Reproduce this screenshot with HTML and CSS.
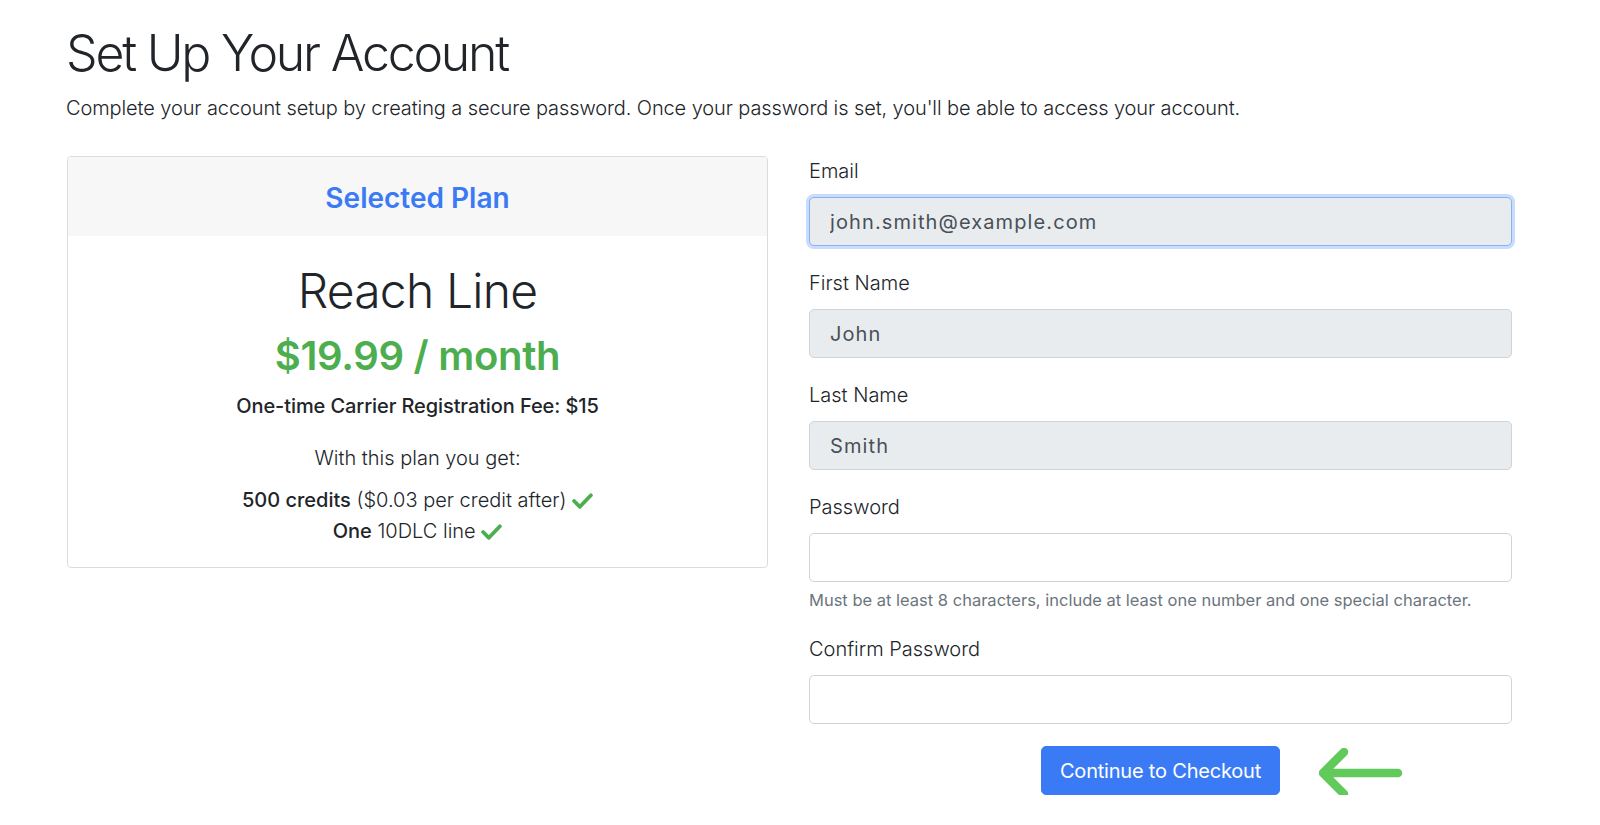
FILE: index.html
```html
<!DOCTYPE html>
<html lang="en">
<head>
<meta charset="utf-8">
<title>Set Up Your Account</title>
<link rel="stylesheet" href="styles.css">
</head>
<body>
<main class="page">
  <h1 class="title">Set Up Your Account</h1>
  <p class="lead">Complete your account setup by creating a secure password. Once your password is set, you'll be able to access your account.</p>

  <div class="layout">
    <section class="card">
      <div class="card-header">
        <h3 class="card-title">Selected Plan</h3>
      </div>
      <div class="card-body">
        <h2 class="plan-name">Reach Line</h2>
        <div class="plan-price">$19.99 / month</div>
        <div class="plan-fee">One-time Carrier Registration Fee: $15</div>
        <p class="plan-intro">With this plan you get:</p>
        <ul class="features">
          <li><strong>500 credits</strong> ($0.03 per credit after) <svg class="check" viewBox="0 0 20 16" width="21" height="17"><path d="M2 8.5 L7.5 14 L18 3" fill="none" stroke="#4cae4f" stroke-width="3.6" stroke-linecap="round" stroke-linejoin="round"/></svg></li>
          <li><strong>One</strong> 10DLC line <svg class="check" viewBox="0 0 20 16" width="21" height="17"><path d="M2 8.5 L7.5 14 L18 3" fill="none" stroke="#4cae4f" stroke-width="3.6" stroke-linecap="round" stroke-linejoin="round"/></svg></li>
        </ul>
      </div>
    </section>

    <form class="form">
      <div class="group">
        <label class="label" for="email">Email</label>
        <input class="input readonly focus" id="email" type="text" value="john.smith@example.com" readonly>
      </div>
      <div class="group">
        <label class="label" for="first">First Name</label>
        <input class="input readonly" id="first" type="text" value="John" readonly>
      </div>
      <div class="group">
        <label class="label" for="last">Last Name</label>
        <input class="input readonly" id="last" type="text" value="Smith" readonly>
      </div>
      <div class="group">
        <label class="label" for="pw">Password</label>
        <input class="input" id="pw" type="password">
        <small class="help">Must be at least 8 characters, include at least one number and one special character.</small>
      </div>
      <div class="group">
        <label class="label" for="pw2">Confirm Password</label>
        <input class="input" id="pw2" type="password">
      </div>
      <div class="actions">
        <div class="btn-wrap">
          <button class="btn" type="button">Continue to Checkout</button>
          <svg class="arrow" viewBox="0 0 84 52" width="84" height="52"><path d="M79 25 L4 25 M4 25 L25 4 M4 25 L25 46" fill="none" stroke="#62c95b" stroke-width="8.5" stroke-linecap="round" stroke-linejoin="round"/></svg>
        </div>
      </div>
    </form>
  </div>
</main>
</body>
</html>
```

FILE: styles.css
```css
* { box-sizing: border-box; }

html, body {
  margin: 0;
  background: #ffffff;
}

body {
  font-family: Inter, "Noto Sans", "Liberation Sans", sans-serif;
  color: #212529;
}

.page {
  padding: 23px 80px 0 66px;
}

.title {
  margin: 0 0 10px 0;
  font-size: 50px;
  line-height: 1.2;
  font-weight: 300;
  letter-spacing: -2.2px;
  color: #212529;
}

.lead {
  margin: 0 0 33px 0;
  font-size: 20px;
  line-height: 1.5;
  font-weight: 300;
  letter-spacing: -0.1px;
}

.layout {
  display: grid;
  grid-template-columns: 701px 703px;
  column-gap: 41px;
  align-items: start;
  padding-left: 1px;
}

/* Card */
.card {
  border: 1px solid #dcdcdc;
  border-radius: 4px;
  background: #fff;
  overflow: hidden;
}

.card-header {
  background: #f7f7f8;
  padding: 25px 20px 20px;
  text-align: center;
}

.card-title {
  margin: 0;
  font-size: 28px;
  line-height: 1.2;
  font-weight: 600;
  color: #3a7bf5;
}

.card-body {
  padding: 26px 20px 20px;
  text-align: center;
}

.plan-name {
  margin: 0 0 13px 0;
  font-size: 48px;
  line-height: 1.2;
  font-weight: 300;
  letter-spacing: -0.8px;
  color: #212529;
}

.plan-price {
  margin: 0 0 11px 0;
  font-size: 40px;
  line-height: 1.2;
  font-weight: 600;
  color: #4cae4f;
  letter-spacing: -0.3px;
}

.plan-fee {
  margin: 0 0 22px 0;
  font-size: 20px;
  line-height: 1.5;
  font-weight: 500;
  letter-spacing: -0.1px;
}

.plan-intro {
  margin: 0 0 12px 0;
  font-size: 20px;
  line-height: 1.5;
  font-weight: 300;
}

.features {
  list-style: none;
  margin: 0;
  padding: 0;
  font-size: 20px;
  line-height: 31px;
  font-weight: 300;
}

.features strong {
  font-weight: 500;
}

.check {
  vertical-align: -2px;
}

/* Form */
.group {
  display: flex;
  flex-direction: column;
  margin-bottom: 22px;
}

.label {
  font-size: 20px;
  line-height: 30px;
  font-weight: 300;
  margin-bottom: 11px;
  color: #212529;
}

.input {
  height: 49px;
  width: 100%;
  padding: 0 20px;
  font-family: Inter, "Noto Sans", sans-serif;
  font-size: 20px;
  letter-spacing: 1.1px;
  color: #495057;
  background: #fff;
  border: 1px solid #ced4da;
  border-radius: 5px;
  outline: none;
}

.input.readonly {
  background: #e9ecef;
}

.input.focus {
  border-color: #86b3f7;
  box-shadow: 0 0 0 3px rgba(80, 140, 245, 0.3);
}

.help {
  margin-top: 6px;
  font-size: 16.5px;
  line-height: 24px;
  color: #6c757d;
  font-weight: 400;
}

.actions {
  display: flex;
  justify-content: center;
}

.btn-wrap {
  position: relative;
}

.btn {
  height: 49px;
  padding: 0 18px;
  font-family: Inter, "Noto Sans", sans-serif;
  font-size: 20px;
  font-weight: 400;
  color: #fff;
  background: #3a7bf5;
  border: 1px solid #3a7bf5;
  border-radius: 5px;
  letter-spacing: -0.2px;
}

.arrow {
  position: absolute;
  left: calc(100% + 39px);
  top: 2px;
}
```
